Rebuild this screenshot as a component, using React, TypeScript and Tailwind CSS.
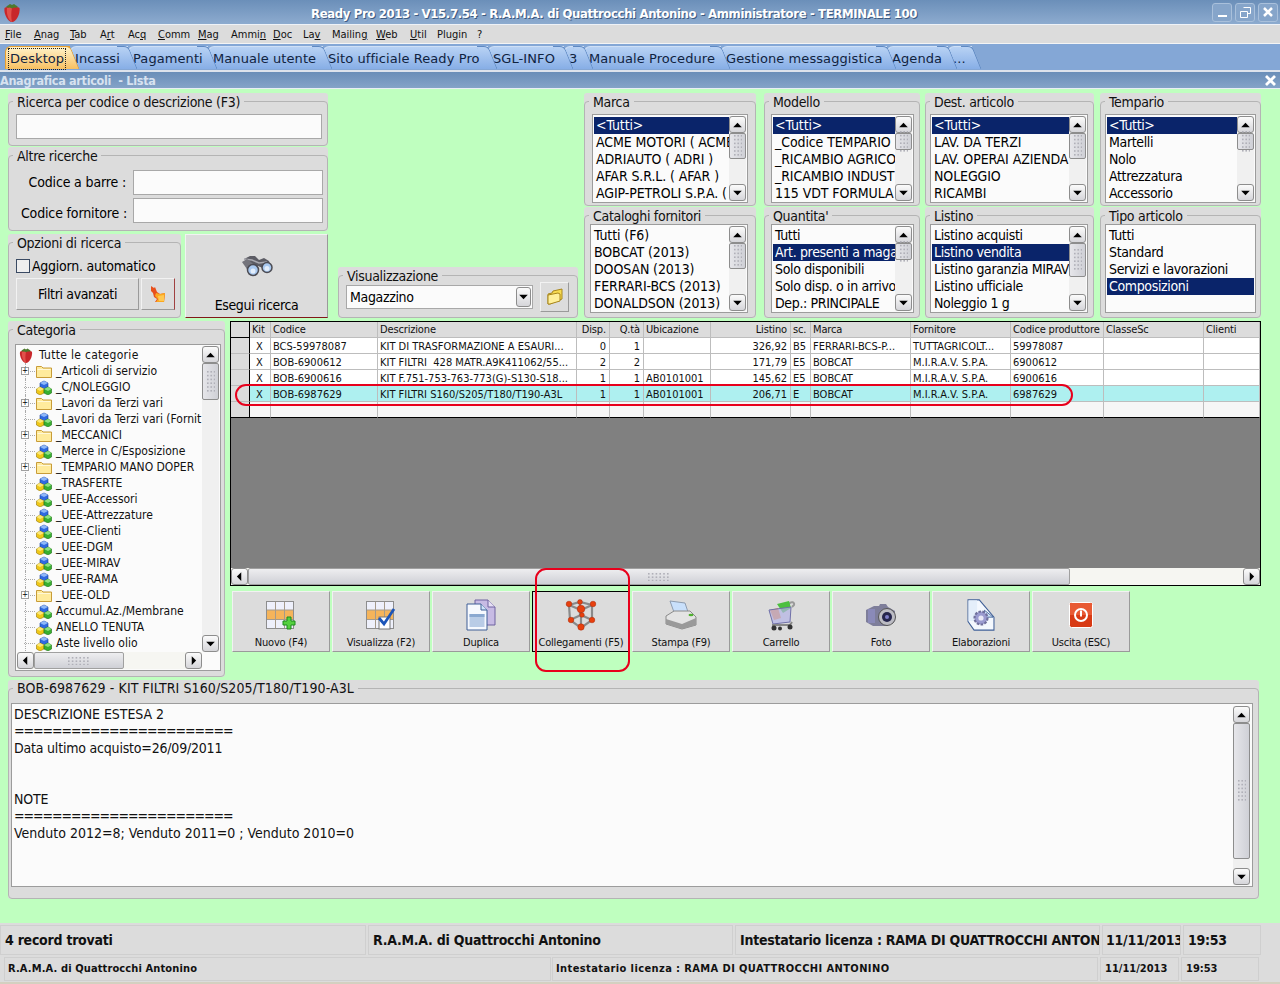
import React from "react";

const Dots = ({ vertical = true }: { vertical?: boolean }) => (
  <svg width={vertical ? 8 : 22} height={vertical ? 22 : 8} viewBox={vertical ? "0 0 8 22" : "0 0 22 8"}>
    {[0, 1, 2, 3, 4, 5].map((i) =>
      [0, 1, 2].map((j) => (
        <rect key={i + "-" + j} x={vertical ? j * 3.4 : i * 3.8} y={vertical ? i * 3.8 : j * 3.4} width="1.6" height="1.6" fill="#b0b0b8" />
      ))
    )}
  </svg>
);

const Arrow = ({ dir }: { dir: "up" | "down" | "left" | "right" }) => {
  const p = { up: "0,6 5,1 10,6", down: "0,1 5,6 10,1", left: "6,0 1,5 6,10", right: "2,0 7,5 2,10" }[dir];
  const s = dir === "up" || dir === "down" ? [10, 7] : [8, 10];
  return (
    <svg width={s[0] - 1} height={s[1] - 1} viewBox={`0 0 ${s[0]} ${s[1]}`}>
      <polygon points={p} fill="#000" />
    </svg>
  );
};

const btnCls = "flex items-center justify-center shrink-0 rounded-[3px] border border-[#8d8d8d] bg-linear-to-b from-[#fbfbfb] to-[#d6d6da]";

const VScroll = ({ thumb, className = "" }: { thumb: number; className?: string }) => (
  <div className={"flex flex-col w-[17px] shrink-0 bg-[#f0f0f0] " + className}>
    <div className={btnCls + " h-[17px]"}><Arrow dir="up" /></div>
    <div className="flex items-center justify-center shrink-0 rounded-[2px] border border-[#8d8d8d] bg-linear-to-r from-[#e6e6ea] to-[#cfd0d6]" style={{ height: thumb }}>
      <Dots />
    </div>
    <div className="flex-1" />
    <div className={btnCls + " h-[17px]"}><Arrow dir="down" /></div>
  </div>
);

const HScroll = ({ thumb, className = "" }: { thumb: number; className?: string }) => (
  <div className={"flex h-[17px] shrink-0 bg-[#f6f6f2] " + className}>
    <div className={btnCls + " w-[17px]"}><Arrow dir="left" /></div>
    <div className="flex items-center justify-center shrink-0 rounded-[2px] border border-[#a0a0a0] bg-linear-to-b from-[#eeeef0] to-[#cfd0d6]" style={{ width: thumb }}>
      <Dots vertical={false} />
    </div>
    <div className="flex-1" />
    <div className={btnCls + " w-[17px]"}><Arrow dir="right" /></div>
  </div>
);

const Panel = ({ title, className = "", legend = "pt-[2px] leading-[15px] tracking-[-0.3px]", children }: { title: string; className?: string; legend?: string; children?: React.ReactNode }) => (
  <div className={"bg-[#dcdcdc] rounded-[3px] " + className}>
    <fieldset className="h-full min-w-0 border border-[#b4b4b4] rounded-[4px]">
      <legend className={"ml-[4px] px-[4px] text-[14px] text-[#111] " + legend}>{title}</legend>
      {children}
    </fieldset>
  </div>
);

const ListBox = ({ items, sel, thumb, className, top = "pt-[1px]", track = "tracking-[-0.35px]" }: { items: string[]; sel: number; thumb?: number; className: string; top?: string; track?: string }) => (
  <div className={"flex h-[89px] border border-[#9c9c9c] bg-[#fbfbfb] p-[1px] " + className}>
    <div className={"flex-1 min-w-0 overflow-hidden " + top}>
      {items.map((t, i) => (
        <div key={t} className={"h-[17px] leading-[17px] pl-[2px] whitespace-nowrap text-[14px] " + track + " " + (i === sel ? "bg-[#0a246a] text-white" : "text-black")}>
          {t}
        </div>
      ))}
    </div>
    {thumb ? <VScroll thumb={thumb} /> : null}
  </div>
);

const Input = ({ className = "" }: { className?: string }) => (
  <div className={"h-[25px] border border-[#a8a8a8] bg-[#fbfbfb] " + className} />
);

const Strawberry = ({ s = 20 }: { s?: number }) => (
  <svg width={s} height={s} viewBox="0 0 20 20">
    <path d="M2.500 6c3-2 12-2 15 0 1 6-3.500 14-7.500 14S1.500 12 2.500 6z" fill="#c8272a" />
    <path d="M5 6c2-1 4-1 5 0-1 5-1 9 0 14-3-1-6-8-5-14z" fill="#e2504a" />
    <path d="M4 5c2-2 3-2 4-3l2 1 2-1c1 1 2 1 4 3-2 1-3 .5-4 .5l-2 1-2-1c-1 0-2 .5-4-.5z" fill="#4d7a2d" />
  </svg>
);

const TreeFolder = () => (
  <svg width="16" height="14" viewBox="0 0 16 14">
    <path d="M.5 2.500h5l1.500 1.500h8.500v9.500H.5z" fill="#ffeb9c" stroke="#c89c38" />
    <rect x="1.500" y="5" width="13" height="1" fill="#fff8d8" />
  </svg>
);

const TreeBlocks = () => (
  <svg width="16" height="15" viewBox="0 0 16 15">
    <path d="M4 3l4-2 4 2v4l-4 2-4-2z" fill="#2f6ae0" stroke="#1c3f96" strokeWidth=".6" />
    <path d="M4 3l4 2 4-2-4-2z" fill="#8fb8f8" />
    <path d="M.5 9l3.500-2 4 2v4l-4 2-3.500-2z" fill="#f0c818" stroke="#94780e" strokeWidth=".6" />
    <path d="M8 9l4-2 3.500 2v4L12 15l-4-2z" fill="#38b030" stroke="#1f7018" strokeWidth=".6" />
    <path d="M8 9l4 2 3.500-2L12 7z" fill="#8ee080" />
    <path d="M.5 9L4 11l4-2-4-2z" fill="#fbe878" />
  </svg>
);

const Binoculars = () => (
  <svg width="32" height="24" viewBox="0 0 32 24">
    <path d="M3 5l6-3h5l4 4 5-2 5 3 2 6-6 2-7-3-5 1z" fill="#5c5c64" />
    <path d="M3 5l8 1 7 3 8-1" stroke="#a9a9b0" strokeWidth="1.500" fill="none" />
    <path d="M1 8l5-3 9 7-1 4-6 2z" fill="#74747c" />
    <circle cx="12" cy="16" r="5.500" fill="#a9c9f0" stroke="#4c4c54" strokeWidth="1.500" />
    <circle cx="26" cy="13.500" r="5" fill="#a9c9f0" stroke="#4c4c54" strokeWidth="1.500" />
    <circle cx="12" cy="17" r="2.500" fill="#e3eefb" />
    <circle cx="26" cy="14.500" r="2.500" fill="#e3eefb" />
  </svg>
);

const FlameArrow = () => (
  <svg width="16" height="18" viewBox="0 0 16 18">
    <path d="M1 1l3 2 1-1 2 5 3 2 5-1-1 9H5l2-3-3-2-1-4-2-2z" fill="#e8501c" />
    <path d="M6 8l4 1 5-1-1 9H6l2-3-3-3z" fill="#fba820" />
    <path d="M8 11l6-1v6H9z" fill="#ffc850" />
  </svg>
);

const FolderIcon = () => (
  <svg width="18" height="18" viewBox="0 0 18 18">
    <path d="M2 6l4-1 1-2 9-2v10L4 16H2z" fill="#f8dc50" stroke="#a8861c" />
    <path d="M2 7l10-2 2 1v7l-10 3H2z" fill="#fff09a" stroke="#a8861c" />
  </svg>
);

const GridIcon = ({ badge }: { badge: "plus" | "check" }) => (
  <svg width="30" height="30" viewBox="0 0 30 30">
    <rect x=".5" y="1.500" width="27" height="27" fill="#eef0fb" stroke="#8d8d8d" />
    <rect x="1" y="10" width="26" height="9.500" fill="#f5b45a" />
    <path d="M9.500 2v26M18.500 2v26M1 10h26M1 19.500h26" stroke="#a59a8a" />
    {badge === "plus" ? (
      <path d="M18 19h4v-4h4v4h4v4h-4v4h-4v-4h-4z" transform="translate(-1 2)" fill="#55d040" stroke="#1c8a1c" />
    ) : (
      <>
        <rect x="13" y="17" width="11" height="12" fill="#fff" stroke="#777" />
        <path d="M13 18l5 6L28 9" fill="none" stroke="#1c55b8" strokeWidth="2.800" />
      </>
    )}
  </svg>
);

const DuplicaIcon = () => (
  <svg width="30" height="32" viewBox="0 0 30 32">
    <path d="M9 1h13l7 7v18H9z" fill="#c7bbe4" stroke="#6f62a0" />
    <path d="M22 1v7h7" fill="#e6e0f4" stroke="#6f62a0" />
    <path d="M1 5h14l6 6v20H1z" fill="#f6f9fe" stroke="#3f5f96" />
    <path d="M15 5v6h6" fill="#cfe4f8" stroke="#3f5f96" />
    <rect x="3.500" y="15" width="15" height="13" fill="#b9cce6" />
    <rect x="3.500" y="15" width="15" height="3" fill="#8aa8d0" />
  </svg>
);

const CubeIcon = () => (
  <svg width="32" height="32" viewBox="0 0 32 32">
    <g stroke="#8a8a8a" strokeWidth="2.200" fill="none">
      <path d="M4 6l11-3 12 3-11 5zM4 6l1 15 11 8 11-8V6M16 11v18M5 21l11-5 11 5M15 3v13" />
    </g>
    {[[4, 5, 2.800], [15, 3, 2.400], [28, 5, 2.800], [16, 10, 3.800], [17, 16, 2.300], [6, 21, 2.800], [27, 21, 2.800], [16, 28, 3.200]].map((c, i) => (
      <circle key={i} cx={c[0]} cy={c[1]} r={c[2]} fill="#e8400e" stroke="#a82808" strokeWidth=".5" />
    ))}
  </svg>
);

const PrinterIcon = () => (
  <svg width="32" height="30" viewBox="0 0 32 30">
    <path d="M5 1l15 2 4 12H10z" fill="#c9e0fb" stroke="#8d9cb0" />
    <path d="M1 16l8-5h16l6 6v8l-14 4-16-5z" fill="#e4e4e4" stroke="#8a8a8a" />
    <path d="M1 19l16 5 14-6v7l-14 4-16-5z" fill="#9a9a9a" />
    <ellipse cx="26" cy="15" rx="2.500" ry="1.300" fill="#50b030" />
  </svg>
);

const CartIcon = () => (
  <svg width="30" height="32" viewBox="0 0 30 32">
    <path d="M23 5c2-3 6-2 5 1l-2 2" fill="none" stroke="#999" strokeWidth="2" />
    <path d="M11 5l12-3 2 7-8 5z" fill="#4cc040" />
    <path d="M4 11l8-2 3 10-7 2z" fill="#f09040" />
    <path d="M3 11l22-3-1 15-17 2z" fill="#b4b4e6" fillOpacity=".7" stroke="#7070a8" />
    <path d="M6 26h18l2-3" fill="none" stroke="#888" strokeWidth="2" />
    <circle cx="8" cy="29" r="2.500" fill="#333" />
    <circle cx="14" cy="29.500" r="2" fill="#333" />
    <circle cx="24" cy="28" r="2.500" fill="#333" />
  </svg>
);

const CameraIcon = () => (
  <svg width="32" height="26" viewBox="0 0 32 26">
    <path d="M1 8l8-4h5l1-2h6l2 3 7 4v10l-8 5H8l-7-4z" fill="#7e7e9a" />
    <rect x="3" y="7" width="7" height="14" fill="#8a8ab8" />
    <circle cx="22" cy="15" r="8.500" fill="#bcbcc4" stroke="#555" />
    <circle cx="22" cy="15" r="5" fill="#25254c" />
    <circle cx="22" cy="15" r="2" fill="#7e7ec8" />
  </svg>
);

const DocGearIcon = () => (
  <svg width="28" height="32" viewBox="0 0 32 37">
    <path d="M1 1h13l17 20v15H8L1 26z" fill="#f4f8fe" stroke="#3f5f96" strokeWidth="1.200" />
    <path d="M1.500 1.500h10v24h-10z" fill="#e4eefa" />
    <path d="M20 13l10 8H20z" fill="#cfe4f8" stroke="#3f5f96" />
    <circle cx="16" cy="22" r="7.500" fill="#9b9bd0" stroke="#70709c" strokeWidth="2.500" strokeDasharray="3 1.500" />
    <circle cx="16" cy="22" r="3" fill="#e8e8f6" />
  </svg>
);

const PowerIcon = () => (
  <svg width="24" height="26" viewBox="0 0 24 26">
    <rect x=".5" y=".5" width="23" height="25" rx="2" fill="#d83a14" stroke="#fff" />
    <rect x="1" y="1" width="22" height="12" fill="#e85a34" />
    <circle cx="12" cy="13" r="6" fill="none" stroke="#fff" strokeWidth="2" />
    <rect x="11" y="8.500" width="2" height="6" fill="#fff" />
  </svg>
);

const menu: [string, string, string, string][] = [
  ["", "F", "ile", "w-[29px]"],
  ["", "A", "nag", "w-[36px]"],
  ["", "T", "ab", "w-[30px]"],
  ["A", "r", "t", "w-[28px]"],
  ["Ac", "q", "", "w-[30px]"],
  ["", "C", "omm", "w-[40px]"],
  ["", "M", "ag", "w-[33px]"],
  ["Ammi", "n", "", "w-[42px]"],
  ["", "D", "oc", "w-[30px]"],
  ["La", "v", "", "w-[29px]"],
  ["Mailin", "g", "", "w-[44px]"],
  ["", "W", "eb", "w-[34px]"],
  ["", "U", "til", "w-[27px]"],
  ["Plugin", "", "", "w-[40px]"],
  ["?", "", "", "w-[10px]"],
];

const tabs: [string, string][] = [
  ["Desktop", "w-[65px]"],
  ["Incassi", "w-[58px]"],
  ["Pagamenti", "w-[80px]"],
  ["Manuale utente", "w-[115px]"],
  ["Sito ufficiale Ready Pro", "w-[165px]"],
  ["SGL-INFO", "w-[76px]"],
  ["3", "w-[20px]"],
  ["Manuale Procedure", "w-[137px]"],
  ["Gestione messaggistica", "w-[166px]"],
  ["Agenda", "w-[61px]"],
  ["...", "w-[24px]"],
];

const tree: [string, number][] = [
  ["_Articoli di servizio", 1],
  ["_C/NOLEGGIO", 0],
  ["_Lavori da Terzi vari", 1],
  ["_Lavori da Terzi vari (Fornit", 0],
  ["_MECCANICI", 1],
  ["_Merce in C/Esposizione", 0],
  ["_TEMPARIO MANO DOPER", 1],
  ["_TRASFERTE", 0],
  ["_UEE-Accessori", 0],
  ["_UEE-Attrezzature", 0],
  ["_UEE-Clienti", 0],
  ["_UEE-DGM", 0],
  ["_UEE-MIRAV", 0],
  ["_UEE-RAMA", 0],
  ["_UEE-OLD", 1],
  ["Accumul.Az./Membrane", 0],
  ["ANELLO TENUTA", 0],
  ["Aste livello olio", 0],
];

const colW = ["w-[19px]", "w-[21px]", "w-[107px]", "w-[199px]", "w-[33px]", "w-[34px]", "w-[67px]", "w-[80px]", "w-[20px]", "w-[100px]", "w-[100px]", "w-[93px]", "w-[100px]", "w-[56px]"];
const head = ["", "Kit", "Codice", "Descrizione", "Disp.", "Q.tà", "Ubicazione", "Listino", "sc.", "Marca", "Fornitore", "Codice produttore", "ClasseSc", "Clienti"];
const rowsData = [
  ["", "X", "BCS-59978087", "KIT DI TRASFORMAZIONE A ESAURI...", "0", "1", "", "326,92", "B5", "FERRARI-BCS-P...", "TUTTAGRICOLT...", "59978087", "", ""],
  ["", "X", "BOB-6900612", "KIT FILTRI  428 MATR.A9K411062/55...", "2", "2", "", "171,79", "E5", "BOBCAT", "M.I.R.A.V. S.P.A.", "6900612", "", ""],
  ["", "X", "BOB-6900616", "KIT F.751-753-763-773(G)-S130-S18...", "1", "1", "AB0101001", "145,62", "E5", "BOBCAT", "M.I.R.A.V. S.P.A.", "6900616", "", ""],
  ["", "X", "BOB-6987629", "KIT FILTRI S160/S205/T180/T190-A3L", "1", "1", "AB0101001", "206,71", "E", "BOBCAT", "M.I.R.A.V. S.P.A.", "6987629", "", ""],
  ["", "", "", "", "", "", "", "", "", "", "", "", "", ""],
];
const alignCell = (i: number) => (i === 1 ? "text-center" : i === 4 || i === 5 || i === 7 ? "text-right" : "text-left");

const buttons: [string, React.ReactNode, boolean][] = [
  ["Nuovo (F4)", <GridIcon badge="plus" />, false],
  ["Visualizza (F2)", <GridIcon badge="check" />, false],
  ["Duplica", <DuplicaIcon />, false],
  ["Collegamenti (F5)", <CubeIcon />, true],
  ["Stampa (F9)", <PrinterIcon />, false],
  ["Carrello", <CartIcon />, false],
  ["Foto", <CameraIcon />, false],
  ["Elaborazioni", <DocGearIcon />, false],
  ["Uscita (ESC)", <PowerIcon />, false],
];

const Bevel = "border border-t-[#f2f2f2] border-l-[#f2f2f2] border-r-[#9a9a9a] border-b-[#9a9a9a] bg-[#dcdcdc]";
const Cell = "border border-[#cfcfcf] bg-[#dcdcdc] flex items-center h-full overflow-hidden whitespace-nowrap";
const capsTrack = "tracking-[-0.1px]";

export default function App() {
  return (
    <div className="w-[1280px] h-[984px] flex flex-col overflow-hidden bg-[#bfffbf] text-black font-['DejaVu_Sans_Condensed','DejaVu_Sans',sans-serif]">
      {/* Title bar */}
      <div className="h-[25px] shrink-0 flex items-center bg-linear-to-b from-[#6b8fb9] to-[#8dabcf] border-b border-[#eef2f7] pl-[2px] pr-[2px]">
        <Strawberry />
        <div className="flex-1 pl-[289px] pt-[3px] text-[13px] font-bold text-white tracking-[-0.37px] whitespace-nowrap [text-shadow:1px_1px_0_#3d5a80]">
          Ready Pro 2013 - V15.7.54 - R.A.M.A. di Quattrocchi Antonino - Amministratore - TERMINALE 100
        </div>
        <div className="flex gap-[3px]">
          <div className="w-[20px] h-[19px] rounded-[3px] border border-[#a9c0db] bg-[#86a5ca] flex items-end justify-center pb-[4px]"><div className="w-[9px] h-[2px] bg-white" /></div>
          <div className="w-[20px] h-[19px] rounded-[3px] border border-[#a9c0db] bg-[#86a5ca] flex items-center justify-center">
            <svg width="11" height="11" viewBox="0 0 11 11"><path d="M3.500.5h7v6h-3M.5 4.500h7v6h-7z" fill="none" stroke="#fff" /></svg>
          </div>
          <div className="w-[20px] h-[19px] rounded-[3px] border border-[#a9c0db] bg-[#86a5ca] flex items-center justify-center">
            <svg width="10" height="10" viewBox="0 0 10 10"><path d="M1 1l8 8M9 1l-8 8" stroke="#fff" strokeWidth="2.500" /></svg>
          </div>
        </div>
      </div>

      {/* Menu */}
      <div className="h-[19px] shrink-0 flex items-center bg-[#dcdcdc] border-b border-[#f4f4f4] pl-[5px] pt-[3px] text-[11px] text-[#111]">
        {menu.map((m) => (
          <span key={m[0] + m[1]} className={"shrink-0 whitespace-nowrap " + m[3]}>
            {m[0]}<span className="underline">{m[1]}</span>{m[2]}
          </span>
        ))}
      </div>

      {/* Tabs */}
      <div className="h-[26px] shrink-0 flex items-end bg-[#84a7d6] pl-[5px] pb-[1px]">
        {tabs.map((t, i) => {
          const active = i === 0;
          return (
            <div
              key={t[0]}
              style={{ zIndex: 30 - i }}
              className={
                "relative h-[23px] shrink-0 flex items-center rounded-tl-[6px] border-t border-l pl-[3px] pt-[2px] font-['DejaVu_Sans',sans-serif] text-[13px] text-[#10233f] tracking-[0.08px] whitespace-nowrap after:absolute after:top-[-1px] after:bottom-0 after:right-[-5px] after:w-[12px] after:skew-x-[22deg] after:rounded-tr-[5px] after:border-t after:border-r " +
                t[1] + " " +
                (active
                  ? "bg-linear-to-b from-[#fff3c8] to-[#f8c060] border-[#e8a030] after:bg-linear-to-b after:from-[#fff3c8] after:to-[#f8c060] after:border-[#e8a030]"
                  : "bg-linear-to-b from-[#b8d2f4] to-[#87aee6] border-[#cfe0f6] after:bg-linear-to-b after:from-[#b8d2f4] after:to-[#87aee6] after:border-[#5f89c2]")
              }
            >
              <span className={"relative z-10 " + (active ? "outline-1 outline-dotted outline-[#222] px-[1px] " : "pl-[1px]")}>{t[0]}</span>
            </div>
          );
        })}
      </div>
      <div className="h-[2px] shrink-0 bg-[#dde3ec]" />

      {/* Sub title */}
      <div className="h-[17px] shrink-0 flex items-center justify-between bg-linear-to-b from-[#6a8eb8] to-[#84a3c8] border-b border-[#e8eef5] pr-[4px] pt-[3px] text-[12.5px] font-bold text-[#d7e2f0] tracking-[-0.3px]">
        <span className="whitespace-pre">Anagrafica articoli  - Lista</span>
        <svg className="-mt-[3px]" width="11" height="11" viewBox="0 0 11 11"><path d="M1 1l9 9M10 1l-9 9" stroke="#fff" strokeWidth="2.800" /></svg>
      </div>

      {/* Content */}
      <div className="flex-1 min-h-0 flex flex-col pt-[4px] pl-[8px]">
        <div className="flex h-[225px] shrink-0">
          {/* Search column */}
          <div className="w-[320px] shrink-0 flex flex-col">
            <Panel title="Ricerca per codice o descrizione (F3)" className="h-[53px]" legend="pt-[2px] leading-[15px] tracking-[-0.25px]">
              <Input className="ml-[7px] w-[306px] mt-[4px]" />
            </Panel>
            <Panel title="Altre ricerche" className="h-[84px] mt-[1px]">
              <div className="flex items-center justify-end mt-[6px] h-[25px] pr-[4px] text-[14px] tracking-[-0.15px]">
                <span className="mr-[7px]">Codice a barre :</span>
                <Input className="w-[190px]" />
              </div>
              <div className="flex items-center justify-end mt-[3px] h-[25px] pr-[4px] text-[14px] tracking-[-0.15px]">
                <span className="mr-[6px] pt-[5px]">Codice fornitore :</span>
                <Input className="w-[190px]" />
              </div>
            </Panel>
            <div className="flex mt-[3px] h-[84px]">
              <Panel title="Opzioni di ricerca" className="w-[173px] h-full">
                <div className="flex items-center h-[14px] mt-[8px] ml-[7px] text-[14px] tracking-[-0.25px]">
                  <span className="w-[14px] h-[14px] border border-[#3a4a63] bg-[#eeeeee] mr-[2px]" />
                  Aggiorn. automatico
                </div>
                <div className="flex mt-[5px] ml-[7px]">
                  <div className={Bevel + " w-[123px] h-[32px] flex items-center justify-center text-[14px] tracking-[-0.35px]"}>Filtri avanzati</div>
                  <div className={Bevel + " ml-[2px] w-[34px] h-[32px] flex items-center justify-center border-r-[#a04040]"}><FlameArrow /></div>
                </div>
              </Panel>
              <div className={Bevel + " ml-[4px] w-[143px] h-full flex flex-col items-center border-b-[#801818] text-[14px] tracking-[-0.35px]"}>
                <div className="h-[50px] pt-[19px]"><Binoculars /></div>
                <div className="mt-[10px]">Esegui ricerca</div>
              </div>
            </div>
          </div>

          {/* Visualizzazione */}
          <div className="w-[240px] ml-[10px] shrink-0 flex flex-col justify-end">
            <Panel title="Visualizzazione" className="h-[51px]">
              <div className="flex items-start ml-[7px]">
                <div className="w-[187px] h-[24px] mt-[1px] border border-[#a8a8a8] bg-[#fbfbfb] flex items-center justify-between pl-[3px] pr-[1px] text-[14px] tracking-[-0.35px]">
                  <span className="pt-[1px]">Magazzino</span>
                  <div className={btnCls + " w-[15px] h-[20px]"}><Arrow dir="down" /></div>
                </div>
                <div className={Bevel + " ml-[7px] w-[29px] h-[30px] -mt-[2px] flex items-center justify-center"}><FolderIcon /></div>
              </div>
            </Panel>
          </div>

          {/* Filters */}
          <div className="ml-[6px] flex">
            <div className="w-[172px] shrink-0 flex flex-col">
              <Panel title="Marca" className="h-[113px]">
                <ListBox className="ml-[7px] mt-[4px] w-[156px]" track={capsTrack} sel={0} thumb={26} items={["<Tutti>", "ACME MOTORI ( ACME", "ADRIAUTO ( ADRI )", "AFAR S.R.L. ( AFAR )", "AGIP-PETROLI S.P.A. ("]} />
              </Panel>
              <Panel title="Cataloghi fornitori" className="h-[111px] mt-[1px]">
                <ListBox className="ml-[5px] w-[158px]" track={capsTrack} sel={-1} thumb={26} items={["Tutti (F6)", "BOBCAT (2013)", "DOOSAN (2013)", "FERRARI-BCS (2013)", "DONALDSON (2013)"]} />
              </Panel>
            </div>
            <div className="w-[156px] ml-[8px] shrink-0 flex flex-col">
              <Panel title="Modello" className="h-[113px]">
                <ListBox className="ml-[6px] mt-[4px] w-[143px]" track={capsTrack} sel={0} thumb={17} items={["<Tutti>", "_Codice TEMPARIO", "_RICAMBIO AGRICO", "_RICAMBIO INDUST", "115 VDT FORMULA"]} />
              </Panel>
              <Panel title="Quantita'" className="h-[111px] mt-[1px]">
                <ListBox className="ml-[6px] w-[143px]" sel={1} thumb={17} items={["Tutti", "Art. presenti a magaz", "Solo disponibili", "Solo disp. o in arrivo", "Dep.: PRINCIPALE"]} />
              </Panel>
            </div>
            <div className="w-[169px] ml-[5px] shrink-0 flex flex-col">
              <Panel title="Dest. articolo" className="h-[113px]">
                <ListBox className="ml-[4px] mt-[4px] w-[158px]" track={capsTrack} sel={0} thumb={26} items={["<Tutti>", "LAV. DA TERZI", "LAV. OPERAI AZIENDA", "NOLEGGIO", "RICAMBI"]} />
              </Panel>
              <Panel title="Listino" className="h-[111px] mt-[1px]">
                <ListBox className="ml-[4px] w-[158px]" sel={1} thumb={34} items={["Listino acquisti", "Listino vendita", "Listino garanzia MIRAV", "Listino ufficiale", "Noleggio 1 g"]} />
              </Panel>
            </div>
            <div className="w-[161px] ml-[6px] shrink-0 flex flex-col">
              <Panel title="Tempario" className="h-[113px]">
                <ListBox className="ml-[4px] mt-[4px] w-[151px]" sel={0} thumb={17} items={["<Tutti>", "Martelli", "Nolo", "Attrezzatura", "Accessorio"]} />
              </Panel>
              <Panel title="Tipo articolo" className="h-[111px] mt-[1px]">
                <ListBox className="ml-[4px] w-[151px]" sel={3} items={["Tutti", "Standard", "Servizi e lavorazioni", "Composizioni"]} />
              </Panel>
            </div>
          </div>
        </div>

        {/* Middle */}
        <div className="flex mt-[3px] h-[356px] shrink-0">
          <Panel title="Categoria" className="w-[217px] h-full shrink-0">
            <div className="ml-[6px] mt-[6px] w-[206px] h-[327px] border border-[#9c9c9c] bg-[#fbfbfb] flex flex-col p-[1px]">
              <div className="flex flex-1 min-h-0">
                <div className="flex-1 min-w-0 overflow-hidden text-[12px] text-[#111] pt-[1px]">
                  <div className="flex items-center h-[16px] pl-[1px] whitespace-nowrap">
                    <Strawberry s={16} />
                    <span className="ml-[5px] tracking-[0.3px]">Tutte le categorie</span>
                  </div>
                  {tree.map((r) => (
                    <div key={r[0]} className="relative flex items-center h-[16px] pl-[19px] whitespace-nowrap">
                      <div className="absolute left-[8px] top-0 bottom-0 border-l border-dotted border-[#aaa]" />
                      <div className="w-[11px] border-t border-dotted border-[#aaa] ml-[-12px] mr-[1px] shrink-0" />
                      {r[1] ? (
                        <span className="absolute left-[4px] top-[4px] w-[8px] h-[8px] border border-[#a0a0a0] bg-white flex items-center justify-center text-[8px] leading-[6px] text-black">+</span>
                      ) : null}
                      {r[1] ? <TreeFolder /> : <TreeBlocks />}
                      <span className="ml-[4px]">{r[0]}</span>
                    </div>
                  ))}
                </div>
                <VScroll thumb={37} />
              </div>
              <div className="flex">
                <HScroll thumb={90} className="w-[185px]" />
              </div>
            </div>
          </Panel>

          <div className="flex-1 min-w-0 ml-[5px] flex flex-col">
            <div className="relative w-[1031px] h-[265px] border border-black flex flex-col bg-[#808080]">
              <table className="table-fixed w-[1029px] border-separate border-spacing-0 text-[11px] text-[#111]">
                <colgroup>
                  {colW.map((c, i) => <col key={i} className={c} />)}
                </colgroup>
                <thead>
                  <tr className="h-[16px]">
                    {head.map((h, i) => (
                      <th key={i} className={"font-normal pl-[2px] pr-[3px] leading-[15px] tracking-[-0.15px] overflow-hidden whitespace-nowrap bg-[#dcdcdc] " + (i === 0 ? "border-r border-b border-black " : "border-r border-[#bdbdbd] border-b border-b-[#bdbdbd] ") + (i === 4 || i === 5 || i === 7 ? "text-right" : "text-left")}>{h}</th>
                    ))}
                  </tr>
                </thead>
                <tbody>
                  {rowsData.map((r, ri) => (
                    <tr key={ri} className="h-[16px]">
                      {r.map((c, i) => (
                        <td key={i} className={"pl-[2px] pr-[3px] pt-[2px] leading-[13px] overflow-hidden whitespace-pre border-b " + (ri === 4 ? "border-b-black " : "border-b-[#bdbdbd] ") + (i === 0 ? "bg-[#dcdcdc] border-r border-black " : "border-r border-[#bdbdbd] " + (ri === 3 ? "bg-[#aef0f0] " : ri === 4 ? "bg-[#f6f6f6] " : "bg-white ")) + alignCell(i)}>{c}</td>
                      ))}
                    </tr>
                  ))}
                </tbody>
              </table>
              <div className="flex-1" />
              <HScroll thumb={822} />
              <div className="absolute left-[4px] top-[62px] w-[838px] h-[22px] rounded-[11px] border-2 border-[#e8001c]" />
            </div>
            <div className="relative flex gap-[2px] mt-[5px] ml-[2px]">
              {buttons.map((b) => (
                <div key={b[0]} className={"w-[98px] h-[61px] shrink-0 flex flex-col items-center text-[11px] tracking-[-0.2px] text-[#111] " + (b[2] ? "border border-black bg-[#dcdcdc]" : Bevel)}>
                  <div className="h-[44px] flex items-center justify-center pt-[2px]">{b[1]}</div>
                  <div className="leading-[14px] whitespace-nowrap">{b[0]}</div>
                </div>
              ))}
              <div className="absolute left-[303px] top-[-23px] w-[95px] h-[104px] rounded-[11px] border-2 border-[#e8001c]" />
            </div>
          </div>
        </div>

        {/* Bottom panel */}
        <Panel title="BOB-6987629 - KIT FILTRI S160/S205/T180/T190-A3L" legend="leading-[17px] tracking-[0.1px]" className="w-[1251px] h-[219px] mt-[3px] shrink-0">
          <div className="ml-[2px] mt-[6px] w-[1242px] h-[184px] border border-[#9c9c9c] bg-[#fbfbfb] flex p-[1px]">
            <div className="flex-1 pl-[1px] pt-[1px] text-[14px] leading-[17px] text-[#111] tracking-[-0.2px] whitespace-pre">
              <div className="h-[17px] tracking-[-0.05px]">DESCRIZIONE ESTESA 2</div>
              <div className="h-[17px] tracking-[-1.05px]">=======================</div>
              <div className="h-[17px]">Data ultimo acquisto=26/09/2011</div>
              <div className="h-[34px]" />
              <div className="h-[17px]">NOTE</div>
              <div className="h-[17px] tracking-[-1.05px]">=======================</div>
              <div className="h-[17px] tracking-[0px]">Venduto 2012=8; Venduto 2011=0 ; Venduto 2010=0</div>
            </div>
            <VScroll thumb={136} className="mr-[1px] mt-[1px]" />
          </div>
        </Panel>

        <div className="flex-1" />
      </div>

      {/* Status bars */}
      <div className="h-[61px] shrink-0 bg-[#dcdcdc] flex flex-col pt-[2px]">
        <div className="flex h-[30px] shrink-0 font-bold text-[14px] text-[#111] tracking-[-0.25px]">
          <div className={Cell + " w-[366px] pl-[4px]"}>4 record trovati</div>
          <div className={Cell + " w-[365px] ml-[2px] pl-[4px]"}>R.A.M.A. di Quattrocchi Antonino</div>
          <div className={Cell + " w-[365px] ml-[2px] pl-[4px]"}>Intestatario licenza : RAMA DI QUATTROCCHI ANTONINO</div>
          <div className={Cell + " w-[79px] ml-[2px] pl-[3px]"}>11/11/2013</div>
          <div className={Cell + " w-[78px] ml-[2px] pl-[4px]"}>19:53</div>
        </div>
        <div className="flex h-[24px] mt-[2px] shrink-0 pl-[4px] font-bold text-[11px] text-[#111]">
          <div className={Cell + " w-[547px] pl-[3px] tracking-[0.12px]"}>R.A.M.A. di Quattrocchi Antonino</div>
          <div className={Cell + " w-[546px] ml-[1px] pl-[3px] tracking-[0.4px]"}>Intestatario licenza : RAMA DI QUATTROCCHI ANTONINO</div>
          <div className={Cell + " w-[79px] ml-[2px] pl-[4px]"}>11/11/2013</div>
          <div className={Cell + " w-[78px] ml-[2px] pl-[4px]"}>19:53</div>
        </div>
        <div className="flex-1 mt-[1px] bg-[#d4d0c0]" />
      </div>
    </div>
  );
}
